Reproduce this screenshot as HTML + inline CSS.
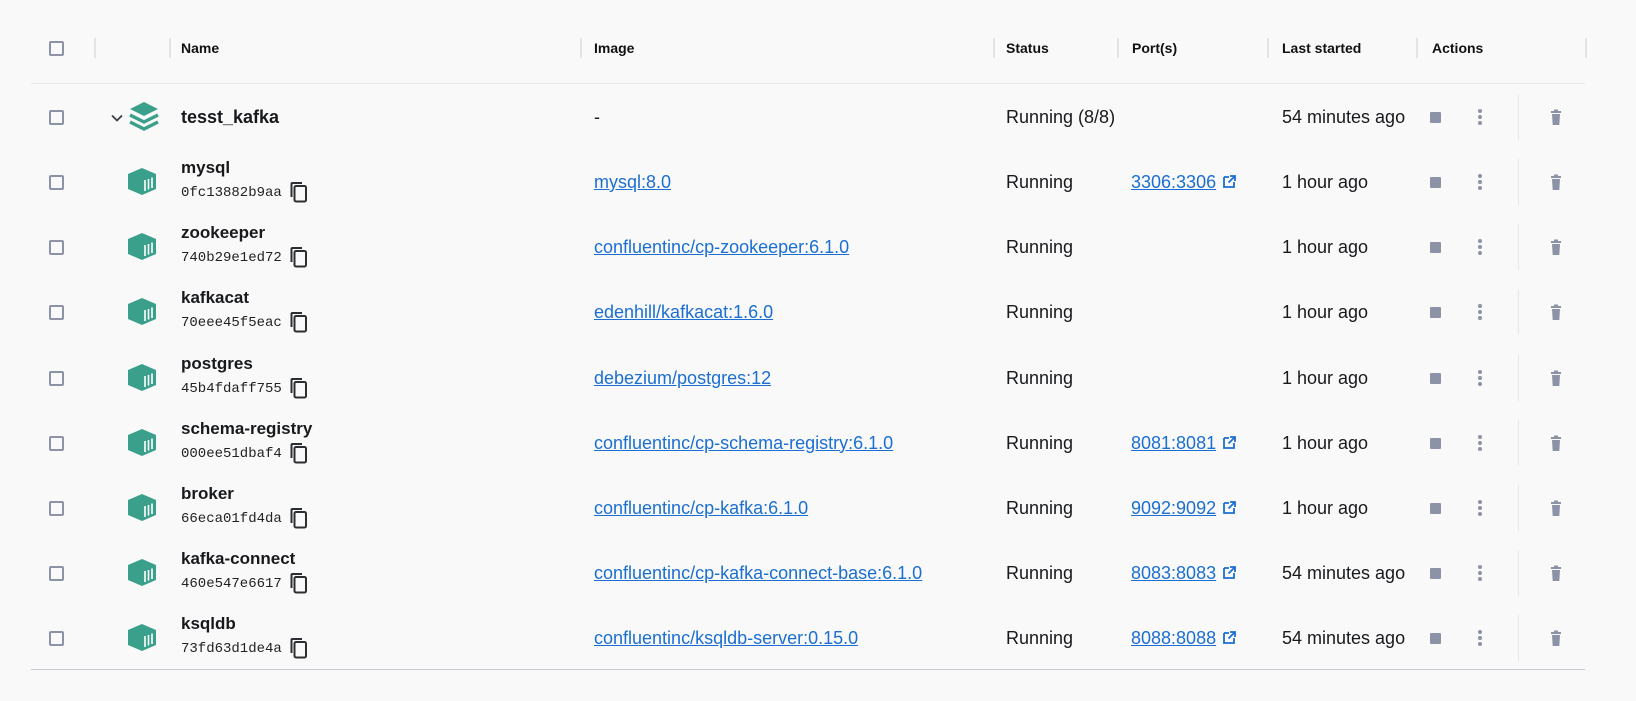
<!DOCTYPE html>
<html><head><meta charset="utf-8"><style>
*{margin:0;padding:0;box-sizing:border-box}
body{width:1636px;height:701px;background:#f9f9f9;font-family:"Liberation Sans",Arial,sans-serif;color:#17191c;position:relative;overflow:hidden}
.hdr{position:absolute;left:31px;top:0;width:1554px;height:84px;border-bottom:1px solid #e6e7ea}
.h{position:absolute;top:40px;font-size:14px;font-weight:bold;color:#111}
.dv{position:absolute;top:38px;width:2px;height:20px;background:#e2e3e6}
.cb{position:absolute;left:49px;width:15px;height:15px;border:2px solid #8d93a6;border-radius:2px}
.row{position:absolute;left:0;width:1636px;height:65px}
.nm{position:absolute;left:181px;font-size:17px;font-weight:bold}
.id{position:absolute;left:181px;font-family:"Liberation Mono",monospace;font-size:14px;color:#222}
.tx{position:absolute;font-size:18px;color:#17191c}
a{color:#1b6fd2;text-decoration:underline}
.stop{position:absolute;left:1430px;width:11px;height:11px;background:#8d93a6;border-radius:1px}
.dots{position:absolute;left:1478px;width:4px}
.dots i{display:block;width:4px;height:4px;border-radius:2px;background:#8d93a6;margin-bottom:2px}
.sep{position:absolute;left:1518px;width:1px;height:46px;background:#e6e7ea}
.trash{position:absolute;left:1549px}
.bot{position:absolute;left:31px;top:669px;width:1554px;height:1px;background:#c9ccd4}
</style></head><body>
<div class="hdr"></div>
<div class="cb" style="top:41px"></div>
<div class="dv" style="left:94px"></div><div class="dv" style="left:169px"></div>
<div class="h" style="left:181px">Name</div>
<div class="dv" style="left:580px"></div><div class="h" style="left:594px">Image</div>
<div class="dv" style="left:993px"></div><div class="h" style="left:1006px">Status</div>
<div class="dv" style="left:1117px"></div><div class="h" style="left:1132px">Port(s)</div>
<div class="dv" style="left:1267px"></div><div class="h" style="left:1282px">Last started</div>
<div class="dv" style="left:1416px"></div><div class="h" style="left:1432px">Actions</div>
<div class="dv" style="left:1585px"></div>

<svg width="0" height="0" style="position:absolute"><defs>
<g id="box"><path d="M14 1 L28 7 L28 22 L14 28 L0 22 L0 7 Z" fill="#3aa08b"/><g stroke="#fff" stroke-width="1.6"><path d="M17 13v11M20.5 12v10.5M24 10.5v10.5"/></g></g>
<g id="cp"><path d="M3 1h10v2H3.5v13H1.5V3a2 2 0 0 1 1.5-2z" fill="#2b2e33"/><rect x="5.5" y="5" width="11.5" height="15.5" rx="1.5" fill="none" stroke="#2b2e33" stroke-width="2"/></g>
<g id="ext"><path d="M1 2h5M1 2v10h10V7" fill="none" stroke="#1b6fd2" stroke-width="1.8"/><path d="M7 1h5v5M12 1L5.5 7.5" fill="none" stroke="#1b6fd2" stroke-width="1.8"/></g>
<g id="tr"><path d="M2 3h10M5 1.5h4" stroke="#8d93a6" stroke-width="2"/><path d="M3 5h8l-.7 11H3.7z" fill="#8d93a6"/></g>
</defs></svg>

<div class="row" style="top:85px">
<div class="cb" style="top:25px"></div>
<svg style="position:absolute;left:111px;top:29px" width="12" height="8"><path d="M1 1.5l5 5 5-5" fill="none" stroke="#3a3f48" stroke-width="1.8"/></svg>
<svg style="position:absolute;left:128px;top:16px" width="32" height="30"><path d="M16 1L30 8 16 15 2 8Z" fill="#3aa08b"/><path d="M2 14l14 7 14-7" fill="none" stroke="#3aa08b" stroke-width="3.4"/><path d="M2 21l14 7 14-7" fill="none" stroke="#3aa08b" stroke-width="3.4"/></svg>
<div class="nm" style="top:22px;font-size:18px">tesst_kafka</div>
<div class="tx" style="left:594px;top:22px">-</div>
<div class="tx" style="left:1006px;top:22px">Running (8/8)</div>
<div class="tx" style="left:1282px;top:22px">54 minutes ago</div>
<div class="stop" style="top:27px"></div>
<div class="dots" style="top:24px"><i></i><i></i><i></i></div>
<div class="sep" style="top:9px"></div>
<svg class="trash" style="top:24px" width="14" height="18"><use href="#tr"/></svg>
</div>

<div id="rows"></div>
<div class="bot"></div>
<script>
var d=[["mysql","0fc13882b9aa","mysql:8.0","3306:3306","1 hour ago"],
["zookeeper","740b29e1ed72","confluentinc/cp-zookeeper:6.1.0","","1 hour ago"],
["kafkacat","70eee45f5eac","edenhill/kafkacat:1.6.0","","1 hour ago"],
["postgres","45b4fdaff755","debezium/postgres:12","","1 hour ago"],
["schema-registry","000ee51dbaf4","confluentinc/cp-schema-registry:6.1.0","8081:8081","1 hour ago"],
["broker","66eca01fd4da","confluentinc/cp-kafka:6.1.0","9092:9092","1 hour ago"],
["kafka-connect","460e547e6617","confluentinc/cp-kafka-connect-base:6.1.0","8083:8083","54 minutes ago"],
["ksqldb","73fd63d1de4a","confluentinc/ksqldb-server:0.15.0","8088:8088","54 minutes ago"]];
var h="";
d.forEach(function(r,i){var t=150+i*65.2;
h+='<div class="row" style="top:'+t+'px"><div class="cb" style="top:25px"></div>'+
'<svg style="position:absolute;left:128px;top:17px" width="29" height="29"><use href="#box"/></svg>'+
'<div class="nm" style="top:8px">'+r[0]+'</div>'+
'<div class="id" style="top:35px">'+r[1]+'</div>'+
'<svg style="position:absolute;left:'+(181+r[1].length*8.4+7)+'px;top:31px" width="19" height="22"><use href="#cp"/></svg>'+
'<div class="tx" style="left:594px;top:22px"><a>'+r[2]+'</a></div>'+
'<div class="tx" style="left:1006px;top:22px">Running</div>'+
(r[3]?'<div class="tx" style="left:1131px;top:22px"><a>'+r[3]+'</a></div><svg style="position:absolute;left:1223px;top:25px" width="14" height="14"><use href="#ext"/></svg>':'')+
'<div class="tx" style="left:1282px;top:22px">'+r[4]+'</div>'+
'<div class="stop" style="top:27px"></div><div class="dots" style="top:24px"><i></i><i></i><i></i></div>'+
'<div class="sep" style="top:9px"></div><svg class="trash" style="top:24px" width="14" height="18"><use href="#tr"/></svg></div>';});
document.getElementById("rows").innerHTML=h;
</script>
</body></html>
